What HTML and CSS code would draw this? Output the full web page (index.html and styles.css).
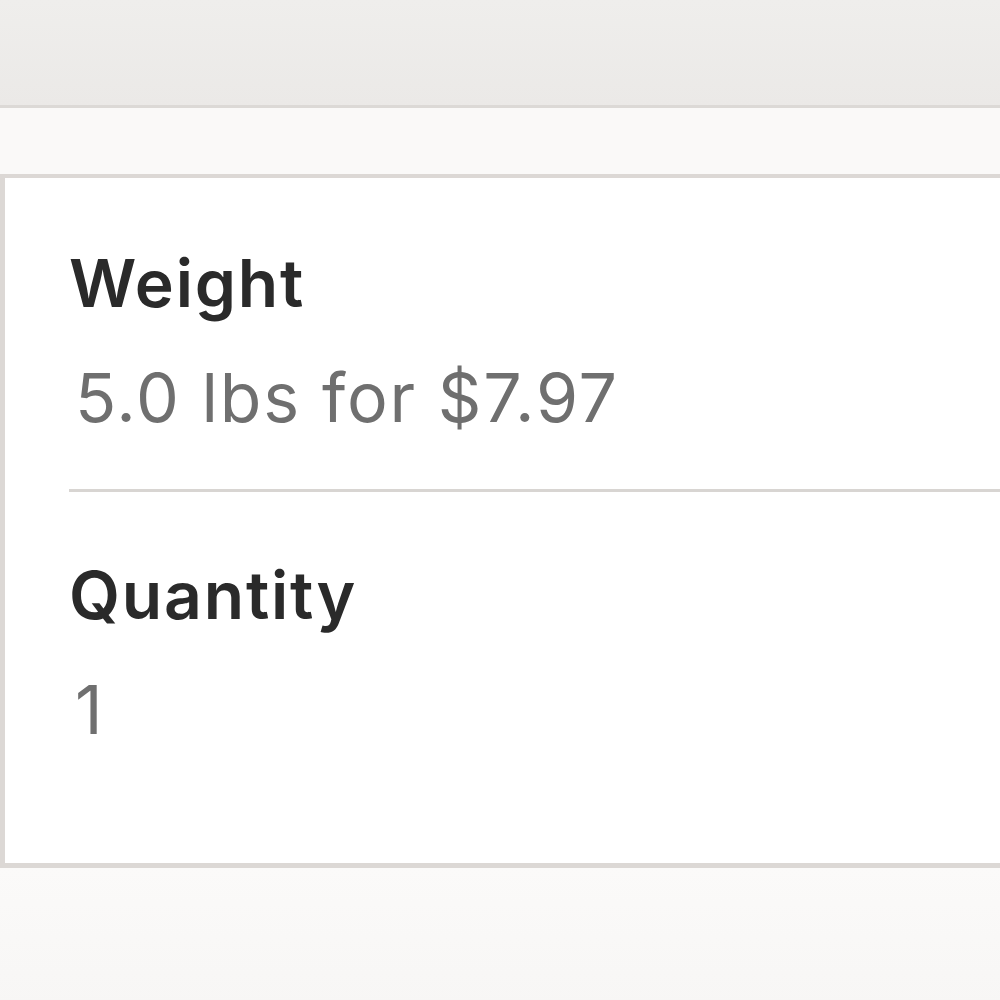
FILE: index.html
```html
<!DOCTYPE html>
<html>
<head>
<meta charset="utf-8">
<link rel="stylesheet" href="styles.css">
</head>
<body>
<div class="topbar"></div>
<div class="band"></div>
<div class="card">
  <div class="field">
    <div class="label">Weight</div>
    <div class="value">5.0 lbs for $7.97</div>
  </div>
  <div class="divider"></div>
  <div class="field">
    <div class="label">Quantity</div>
    <div class="value">1</div>
  </div>
</div>
<div class="bottom"></div>
</body>
</html>
```
FILE: styles.css
```css
html, body {
  margin: 0;
  padding: 0;
  width: 1000px;
  height: 1000px;
  overflow: hidden;
  background: #f9f8f7;
  font-family: "Inter", "Lato", sans-serif;
  font-variant-ligatures: none;
}
.topbar {
  height: 105px;
  background: linear-gradient(#efeeec, #ebe9e7);
  border-bottom: 3px solid #dcd9d6;
}
.band {
  height: 66px;
  background: #faf9f8;
}
.card {
  background: #fff;
  border-top: 4px solid #dcd8d5;
  border-bottom: 5px solid #dcd8d5;
  border-left: 5px solid #dcd8d5;
  padding: 65px 0 114px 64px;
  display: flex;
  flex-direction: column;
}
.field {
  display: flex;
  flex-direction: column;
  gap: 34px;
}
.label {
  font-size: 66px;
  font-weight: 600;
  color: #2a2a2a;
  line-height: 80px;
  letter-spacing: 1.8px;
}
.value {
  font-size: 68px;
  font-weight: 400;
  color: #6f6f6f;
  line-height: 80px;
  padding-left: 6px;
  letter-spacing: 1.8px;
}
.divider {
  height: 3px;
  background: #d8d5d2;
  margin: 52px 0 63px 0;
}
.bottom {
  height: 140px;
  background: linear-gradient(#fbfaf9, #f7f6f5);
}
```
